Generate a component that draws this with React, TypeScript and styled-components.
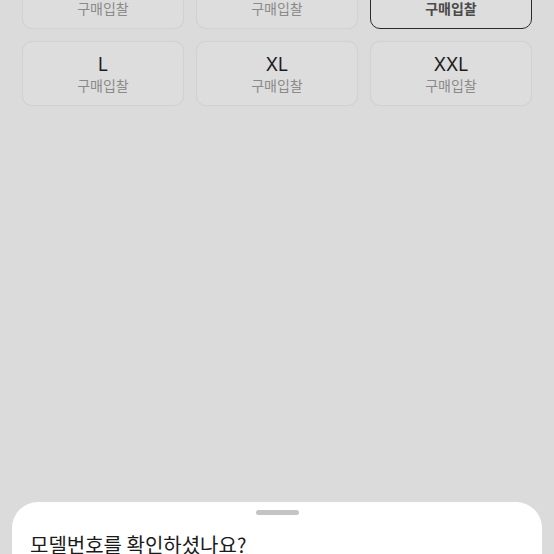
import styled, { createGlobalStyle } from "styled-components";

const sizes = [
  { label: "M", active: false },
  { label: "M", active: false },
  { label: "XS", active: true },
  { label: "L", active: false },
  { label: "XL", active: false },
  { label: "XXL", active: false },
];

const App = () => {
  return (
    <Page>
      <Global />
      <Grid>
        {sizes.map((s, i) => (
          <SizeCard key={i} $active={s.active}>
            <SizeLabel>{s.label}</SizeLabel>
            <Bid $active={s.active}>구매입찰</Bid>
          </SizeCard>
        ))}
      </Grid>
      <Spacer />
      <Sheet>
        <Handle />
        <Title>모델번호를 확인하셨나요?</Title>
      </Sheet>
    </Page>
  );
};

export default App;

const Global = createGlobalStyle`
  html, body {
    margin: 0;
    padding: 0;
    background: #dbdbdb;
  }
  * { box-sizing: border-box; }
`;

const Page = styled.div`
  width: 554px;
  height: 554px;
  overflow: hidden;
  display: flex;
  flex-direction: column;
  background: #dbdbdb;
  font-family: "Noto Sans CJK KR", "Noto Sans", sans-serif;
`;

const Grid = styled.div`
  margin-top: -36px;
  padding: 0 22px;
  display: grid;
  grid-template-columns: repeat(3, 1fr);
  gap: 12px;
`;

const SizeCard = styled.div<{ $active: boolean }>`
  height: 65px;
  border-radius: 10px;
  background: #dddddd;
  border: ${(p) => (p.$active ? "1.5px solid #2a2a2a" : "1px solid #d2d2d2")};
  box-shadow: ${(p) => (p.$active ? "none" : "0 0 1px rgba(0,0,0,0.06)")};
  display: flex;
  flex-direction: column;
  align-items: center;
  justify-content: center;
  padding-top: 2px;
`;

const SizeLabel = styled.div`
  font-family: "Inter", "Noto Sans CJK KR", sans-serif;
  font-size: 18px;
  line-height: 21px;
  color: #1c1c1c;
`;

const Bid = styled.div<{ $active: boolean }>`
  font-size: 14px;
  line-height: 20px;
  color: ${(p) => (p.$active ? "#4a4a4a" : "#8a8a8a")};
  font-weight: ${(p) => (p.$active ? 700 : 400)};
`;

const Spacer = styled.div`
  flex: 1;
`;

const Sheet = styled.div`
  flex: 0 0 52px;
  margin: 0 12px;
  background: #ffffff;
  border-radius: 26px 26px 0 0;
  display: flex;
  flex-direction: column;
  align-items: center;
  overflow: hidden;
`;

const Handle = styled.div`
  flex-shrink: 0;
  margin-top: 8px;
  width: 43px;
  height: 5px;
  border-radius: 3px;
  background: #c4c4c4;
`;

const Title = styled.div`
  flex-shrink: 0;
  align-self: flex-start;
  margin: 16px 0 0 18px;
  font-size: 20px;
  line-height: 28px;
  color: #1a1a1a;
  white-space: nowrap;
`;
